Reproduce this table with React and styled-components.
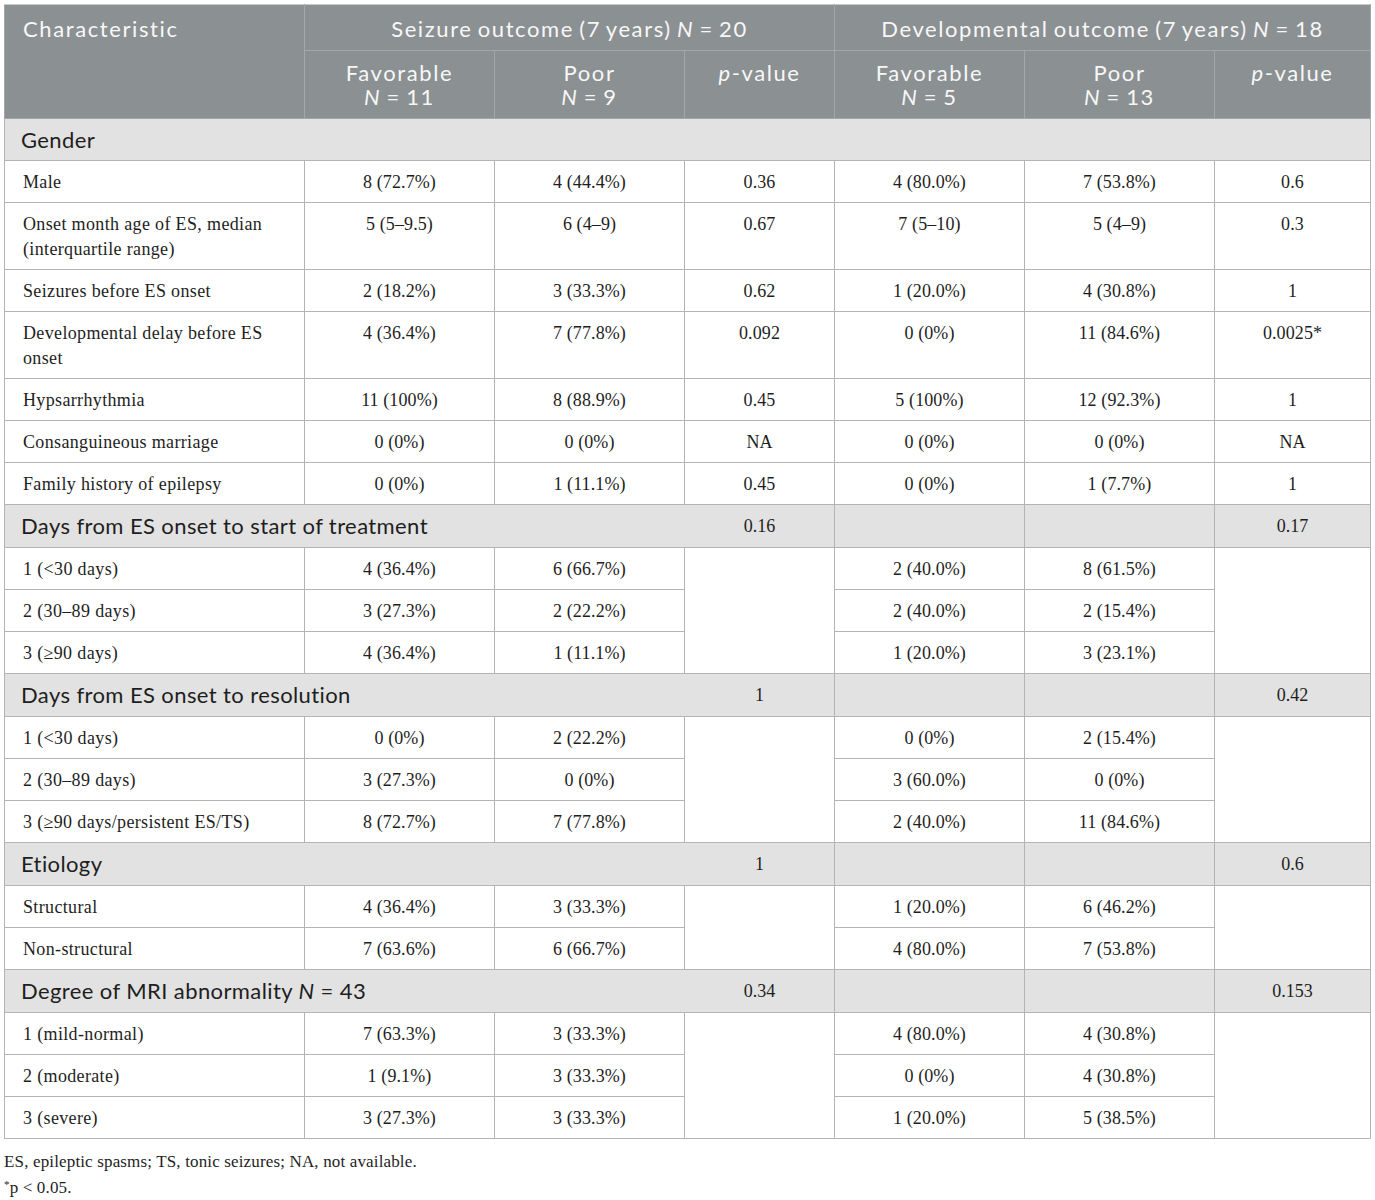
import React from 'react';
import styled, { createGlobalStyle } from 'styled-components';

const GlobalStyle = createGlobalStyle`
    body {
        margin: 0;
        background: #ffffff;
    }
`;

const columns = [300, 190, 190, 150, 190, 190, 156];

const sections = [
    {
        title: 'Gender',
        full: true,
        rows: [
            ['Male', '8 (72.7%)', '4 (44.4%)', '0.36', '4 (80.0%)', '7 (53.8%)', '0.6'],
            ['Onset month age of ES, median (interquartile range)', '5 (5–9.5)', '6 (4–9)', '0.67', '7 (5–10)', '5 (4–9)', '0.3'],
            ['Seizures before ES onset', '2 (18.2%)', '3 (33.3%)', '0.62', '1 (20.0%)', '4 (30.8%)', '1'],
            ['Developmental delay before ES onset', '4 (36.4%)', '7 (77.8%)', '0.092', '0 (0%)', '11 (84.6%)', '0.0025*'],
            ['Hypsarrhythmia', '11 (100%)', '8 (88.9%)', '0.45', '5 (100%)', '12 (92.3%)', '1'],
            ['Consanguineous marriage', '0 (0%)', '0 (0%)', 'NA', '0 (0%)', '0 (0%)', 'NA'],
            ['Family history of epilepsy', '0 (0%)', '1 (11.1%)', '0.45', '0 (0%)', '1 (7.7%)', '1'],
        ],
    },
    {
        title: 'Days from ES onset to start of treatment',
        p1: '0.16',
        p2: '0.17',
        rows: [
            ['1 (<30 days)', '4 (36.4%)', '6 (66.7%)', '2 (40.0%)', '8 (61.5%)'],
            ['2 (30–89 days)', '3 (27.3%)', '2 (22.2%)', '2 (40.0%)', '2 (15.4%)'],
            ['3 (≥90 days)', '4 (36.4%)', '1 (11.1%)', '1 (20.0%)', '3 (23.1%)'],
        ],
    },
    {
        title: 'Days from ES onset to resolution',
        p1: '1',
        p2: '0.42',
        rows: [
            ['1 (<30 days)', '0 (0%)', '2 (22.2%)', '0 (0%)', '2 (15.4%)'],
            ['2 (30–89 days)', '3 (27.3%)', '0 (0%)', '3 (60.0%)', '0 (0%)'],
            ['3 (≥90 days/persistent ES/TS)', '8 (72.7%)', '7 (77.8%)', '2 (40.0%)', '11 (84.6%)'],
        ],
    },
    {
        title: 'Etiology',
        p1: '1',
        p2: '0.6',
        rows: [
            ['Structural', '4 (36.4%)', '3 (33.3%)', '1 (20.0%)', '6 (46.2%)'],
            ['Non-structural', '7 (63.6%)', '6 (66.7%)', '4 (80.0%)', '7 (53.8%)'],
        ],
    },
    {
        title: (
            <>
                Degree of MRI abnormality <i>N</i> = 43
            </>
        ),
        p1: '0.34',
        p2: '0.153',
        rows: [
            ['1 (mild-normal)', '7 (63.3%)', '3 (33.3%)', '4 (80.0%)', '4 (30.8%)'],
            ['2 (moderate)', '1 (9.1%)', '3 (33.3%)', '0 (0%)', '4 (30.8%)'],
            ['3 (severe)', '3 (27.3%)', '3 (33.3%)', '1 (20.0%)', '5 (38.5%)'],
        ],
    },
];

const App = () => {
    return (
        <Page>
            <GlobalStyle />
            <Table>
                <colgroup>
                    {columns.map((w, i) => (
                        <col key={i} style={{ width: `${w}px` }} />
                    ))}
                </colgroup>
                <thead>
                    <tr>
                        <HeadCell rowSpan={2} $align="left">Characteristic</HeadCell>
                        <HeadCell colSpan={3}>
                            Seizure outcome (7 years) <i>N</i> = 20
                        </HeadCell>
                        <HeadCell colSpan={3}>
                            Developmental outcome (7 years) <i>N</i> = 18
                        </HeadCell>
                    </tr>
                    <tr>
                        <SubHeadCell>Favorable<br /><i>N</i> = 11</SubHeadCell>
                        <SubHeadCell>Poor<br /><i>N</i> = 9</SubHeadCell>
                        <SubHeadCell><i>p</i>-value</SubHeadCell>
                        <SubHeadCell>Favorable<br /><i>N</i> = 5</SubHeadCell>
                        <SubHeadCell>Poor<br /><i>N</i> = 13</SubHeadCell>
                        <SubHeadCell><i>p</i>-value</SubHeadCell>
                    </tr>
                </thead>
                {sections.map((section, si) => (
                    <tbody key={si}>
                        {section.full ? (
                            <tr>
                                <SectionCell colSpan={7} $first>{section.title}</SectionCell>
                            </tr>
                        ) : (
                            <tr>
                                <SectionCell colSpan={3} $noRight>{section.title}</SectionCell>
                                <SectionValue $noLeft>{section.p1}</SectionValue>
                                <SectionValue />
                                <SectionValue />
                                <SectionValue>{section.p2}</SectionValue>
                            </tr>
                        )}
                        {section.rows.map((row, ri) =>
                            section.full ? (
                                <tr key={ri}>
                                    <LabelCell>{row[0]}</LabelCell>
                                    {row.slice(1).map((v, vi) => (
                                        <ValueCell key={vi}>{v}</ValueCell>
                                    ))}
                                </tr>
                            ) : (
                                <tr key={ri}>
                                    <LabelCell>{row[0]}</LabelCell>
                                    <ValueCell>{row[1]}</ValueCell>
                                    <ValueCell>{row[2]}</ValueCell>
                                    {ri === 0 && <ValueCell rowSpan={section.rows.length} />}
                                    <ValueCell>{row[3]}</ValueCell>
                                    <ValueCell>{row[4]}</ValueCell>
                                    {ri === 0 && <ValueCell rowSpan={section.rows.length} />}
                                </tr>
                            )
                        )}
                    </tbody>
                ))}
            </Table>
            <Notes>
                <p>ES, epileptic spasms; TS, tonic seizures; NA, not available.</p>
                <p><sup>*</sup>p &lt; 0.05.</p>
            </Notes>
        </Page>
    );
};

const Page = styled.div`
    padding: 4px;
    width: 1366px;
`;

const Table = styled.table`
    width: 1366px;
    table-layout: fixed;
    border-collapse: collapse;
    border: 1px solid #b3b5b4;
    color: #1e1e1e;
`;

const HeadCell = styled.th`
    background: #8b9092;
    color: #f7f7f7;
    font-family: 'Lato', 'Open Sans', sans-serif;
    font-weight: 400;
    font-size: 22px;
    letter-spacing: 1.6px;
    word-spacing: -2px;
    line-height: 26px;
    text-align: ${(p) => p.$align || 'center'};
    vertical-align: top;
    padding: 11px 18px 8px;
    border: 1px solid #a3a7a8;
    border-top-color: #c9cbca;

    i {
        font-style: italic;
    }
`;

const SubHeadCell = styled(HeadCell)`
    line-height: 24px;
    padding: 10px 12px 9px;
    height: 67px;
    box-sizing: border-box;
`;

const SectionCell = styled.td`
    background: #e1e2e1;
    font-family: 'Lato', 'Open Sans', sans-serif;
    font-size: 22px;
    letter-spacing: 0.4px;
    line-height: 26px;
    padding: ${(p) => (p.$first ? '8px 16px 7px' : '8px 16px 8px')};
    box-sizing: border-box;
    border: 1px solid #b3b5b4;
    ${(p) => p.$noRight && 'border-right-color: #e1e2e1;'}
`;

const SectionValue = styled.td`
    background: #e1e2e1;
    font-family: 'Liberation Serif', 'Times New Roman', serif;
    font-size: 18px;
    text-align: center;
    vertical-align: middle;
    border: 1px solid #b3b5b4;
    ${(p) => p.$noLeft && 'border-left-color: #e1e2e1;'}
`;

const LabelCell = styled.td`
    font-family: 'Liberation Serif', 'Times New Roman', serif;
    font-size: 18px;
    letter-spacing: 0.35px;
    line-height: 25px;
    padding: 9px 18px 7px;
    vertical-align: top;
    border: 1px solid #b3b5b4;
    box-sizing: border-box;
`;

const ValueCell = styled(LabelCell)`
    text-align: center;
    letter-spacing: 0.1px;
    padding: 9px 10px 7px;
`;

const Notes = styled.div`
    font-family: 'Liberation Serif', 'Times New Roman', serif;
    font-size: 17px;
    letter-spacing: 0.15px;
    color: #1e1e1e;
    padding-top: 10px;

    p {
        margin: 0;
        line-height: 26px;
    }

    sup {
        font-size: 11px;
        vertical-align: 5px;
        line-height: 0;
    }
`;

export default App;
